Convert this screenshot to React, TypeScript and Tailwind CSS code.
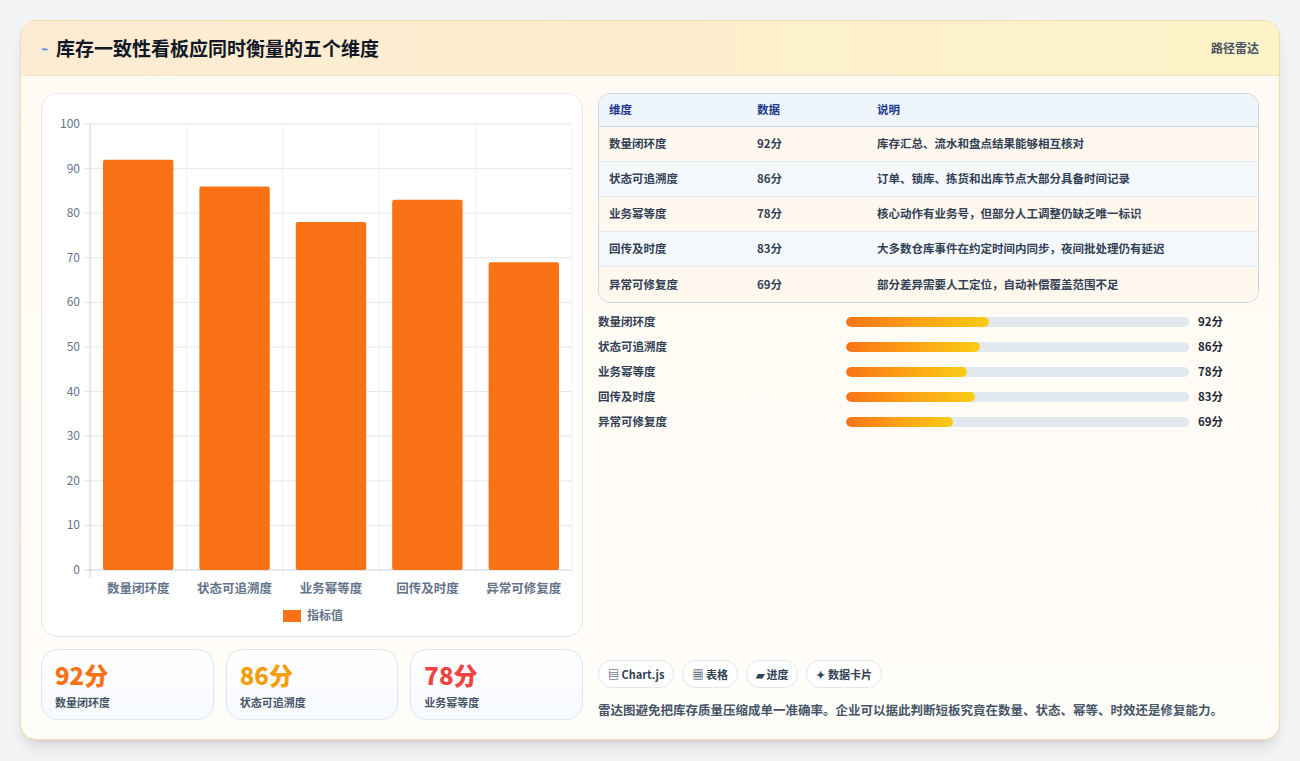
import React from 'react';

const dims = [
  { name: '数量闭环度', v: 92, desc: '库存汇总、流水和盘点结果能够相互核对' },
  { name: '状态可追溯度', v: 86, desc: '订单、锁库、拣货和出库节点大部分具备时间记录' },
  { name: '业务幂等度', v: 78, desc: '核心动作有业务号，但部分人工调整仍缺乏唯一标识' },
  { name: '回传及时度', v: 83, desc: '大多数仓库事件在约定时间内同步，夜间批处理仍有延迟' },
  { name: '异常可修复度', v: 69, desc: '部分差异需要人工定位，自动补偿覆盖范围不足' },
];

const font = { fontFamily: '"Noto Sans CJK SC", "Noto Sans", sans-serif' };

function Chart() {
  // plot area in svg coords: x 48..530, y 22..468 (0..100)
  const x0 = 48, x1 = 530, yTop = 22, yBot = 468;
  const cw = (x1 - x0) / 5;
  const ys = (v: number) => yBot - ((yBot - yTop) * v) / 100;
  return (
    <svg width="540" height="530" viewBox="0 0 540 530" style={font}>
      {[0, 10, 20, 30, 40, 50, 60, 70, 80, 90, 100].map((t) => (
        <g key={t}>
          <line x1={x0 - 6} x2={x1} y1={ys(t)} y2={ys(t)} stroke={t === 0 ? '#cbd5e1' : '#e5e7eb'} />
          <text x={x0 - 10} y={ys(t) + 4} textAnchor="end" fontSize="12" fill="#64748b">{t}</text>
        </g>
      ))}
      {[0, 1, 2, 3, 4, 5].map((i) => (
        <line key={i} x1={x0 + i * cw} x2={x0 + i * cw} y1={yTop} y2={yBot + 8} stroke={i === 0 ? '#cbd5e1' : '#eef0f3'} />
      ))}
      {dims.map((d, i) => (
        <g key={d.name}>
          <rect x={x0 + i * cw + 13} y={ys(d.v)} width={cw - 26} height={yBot - ys(d.v)} rx="2" fill="#f97316" />
          <text x={x0 + i * cw + cw / 2} y={yBot + 23} textAnchor="middle" fontSize="12.5" fontWeight="600" fill="#64748b">{d.name}</text>
        </g>
      ))}
      <rect x="241" y="508" width="18" height="12" fill="#f97316" />
      <text x="265" y="518" fontSize="12" fontWeight="600" fill="#64748b">指标值</text>
    </svg>
  );
}

export default function App() {
  const stats = [
    { v: '92分', c: 'text-[#f97316]', l: '数量闭环度' },
    { v: '86分', c: 'text-[#f59e0b]', l: '状态可追溯度' },
    { v: '78分', c: 'text-[#ef4444]', l: '业务幂等度' },
  ];
  return (
    <div className="w-[1300px] h-[761px] bg-[#f3f4f6] p-5" style={font}>
      <div className="h-[720px] rounded-2xl border border-[#f5d9a8] bg-gradient-to-b from-[#fffaf2] to-[#fffdf9] shadow-lg overflow-hidden flex flex-col">
        <div className="h-[55px] shrink-0 flex items-center justify-between px-5 bg-gradient-to-r from-[#fdebd3] to-[#fdf3c8] border-b border-[#f3e6d0]">
          <div className="flex items-center gap-2">
            <span className="text-[#3b82f6] text-xs">⌁</span>
            <span className="text-[19px] font-bold text-[#111827]">库存一致性看板应同时衡量的五个维度</span>
          </div>
          <span className="text-xs font-semibold text-[#4b5563]">路径雷达</span>
        </div>
        <div className="flex-1 flex gap-[15px] px-5 pt-[17px] pb-[19px]">
          <div className="w-[542px] flex flex-col gap-3">
            <div className="h-[544px] rounded-2xl border border-[#e5e7eb] bg-white pt-2 overflow-hidden">
              <Chart />
            </div>
            <div className="flex gap-3 flex-1">
              {stats.map((s) => (
                <div key={s.l} className="flex-1 rounded-2xl border border-[#dbe7f5] bg-gradient-to-b from-white to-[#f6f9fd] px-[13px] pt-[10px]">
                  <div className={`text-[24px] leading-[30px] font-extrabold ${s.c}`}>{s.v}</div>
                  <div className="text-[11px] font-semibold text-[#475569] mt-1">{s.l}</div>
                </div>
              ))}
            </div>
          </div>
          <div className="flex-1 flex flex-col">
            <div className="rounded-xl border border-[#cbd5e1] overflow-hidden text-[11.5px] font-semibold">
              <div className="flex h-[33px] items-center bg-[#eef5fd] border-b border-[#c7d7ea] text-[#1e3a8a]">
                <div className="w-[158px] pl-[10px]">维度</div>
                <div className="w-[120px]">数据</div>
                <div>说明</div>
              </div>
              {dims.map((d, i) => (
                <div key={d.name} className={`flex h-[35px] items-center text-[#334155] ${i % 2 === 0 ? 'bg-[#fef8ee]' : 'bg-[#f5f9fd]'} ${i < 4 ? 'border-b border-[#e2e8f0]' : ''}`}>
                  <div className="w-[158px] pl-[10px]">{d.name}</div>
                  <div className="w-[120px]">{d.v}分</div>
                  <div>{d.desc}</div>
                </div>
              ))}
            </div>
            <div className="mt-[12px] flex flex-col gap-[11px]">
              {dims.map((d) => (
                <div key={d.name} className="flex items-center h-[14px] text-[11.5px] font-semibold text-[#334155]">
                  <div className="w-[248px]">{d.name}</div>
                  <div className="w-[343px] h-[10px] rounded-full bg-[#e2e8f0] overflow-hidden">
                    <div className="h-full rounded-full bg-gradient-to-r from-[#f97316] to-[#facc15]" style={{ width: `${d.v * 0.453}%` }} />
                  </div>
                  <div className="ml-[9px] font-bold text-[#1f2937]">{d.v}分</div>
                </div>
              ))}
            </div>
            <div className="mt-auto flex gap-2 text-[11px] font-semibold text-[#334155]">
              {['▤ Chart.js', '▦ 表格', '▰ 进度', '✦ 数据卡片'].map((t) => (
                <span key={t} className="h-[28px] px-[9px] flex items-center rounded-full border border-[#e2e8f0] bg-white">{t}</span>
              ))}
            </div>
            <div className="mt-[13px] text-[12.5px] font-semibold text-[#475569]">雷达图避免把库存质量压缩成单一准确率。企业可以据此判断短板究竟在数量、状态、幂等、时效还是修复能力。</div>
          </div>
        </div>
      </div>
    </div>
  );
}
